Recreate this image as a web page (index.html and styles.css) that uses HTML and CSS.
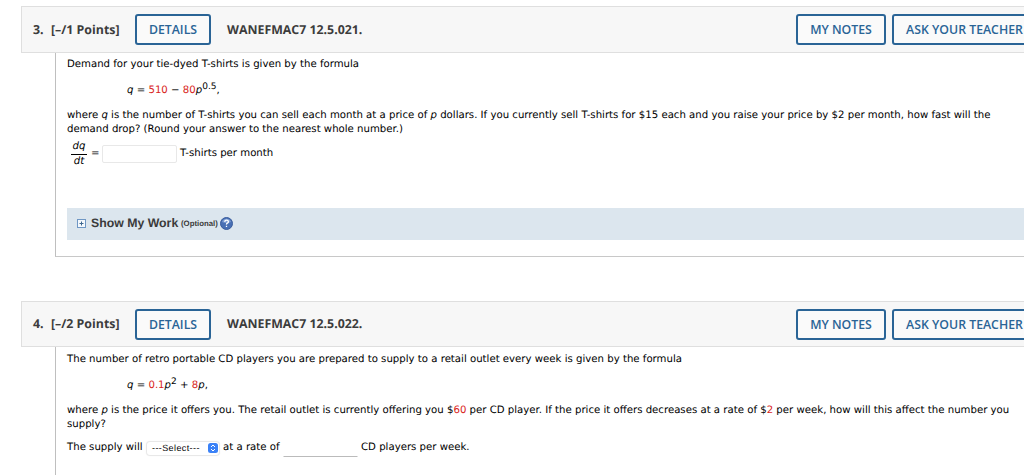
FILE: index.html
```
<!DOCTYPE html>
<html lang="en">
<head>
  <meta charset="UTF-8">
  <title>Homework</title>
  <meta name="viewport" content="width=device-width, initial-scale=1.0">
  <link rel="stylesheet" href="styles.css">
</head>
<body>
  <div class="question">
    <div class="question-header">
      <span class="number">3.</span>
      <span class="points">[–/1 Points]</span>
      <button type="button" class="btn btn-details">DETAILS</button>
      <span class="question-name">WANEFMAC7 12.5.021.</span>
      <div class="actions">
        <button type="button" class="btn btn-notes">MY NOTES</button>
        <button type="button" class="btn btn-teacher">ASK YOUR TEACHER</button>
      </div>
    </div>
    <div class="question-body">
      <p>Demand for your tie-dyed T-shirts is given by the formula</p>
      <p class="formula"><i>q</i> = <span class="red">510</span> − <span class="red">80</span><i>p</i><sup>0.5</sup>,</p>
      <p>where <i>q</i> is the number of T-shirts you can sell each month at a price of <i>p</i> dollars. If you currently sell T-shirts for $15 each and you raise your price by $2 per month, how fast will the<br>demand drop? (Round your answer to the nearest whole number.)</p>
      <div class="answer">
        <span class="fraction"><i>dq</i><i class="bottom">dt</i></span>
        <span class="equals">=</span>
        <input type="text" class="blank" aria-label="Answer">
        <span>T-shirts per month</span>
      </div>
      <div class="show-work">
        <svg class="plus" width="9" height="9" viewBox="0 0 9 9">
          <rect x=".5" y=".5" width="8" height="8" fill="#f4f8fc" stroke="#6f97c4"/>
          <path d="M2.5 4.5h4M4.5 2.5v4" stroke="#3d668f"/>
        </svg>
        <b>Show My Work</b>
        <small>(Optional)</small>
        <svg class="help" width="13" height="13" viewBox="0 0 13 13">
          <circle cx="6.5" cy="6.5" r="6" fill="#486fb4" stroke="#3a5c9c"/>
          <path d="M2 5a4.8 4.8 0 0 1 9 0q-4.500 2-9 0" fill="#7c9cd2"/>
          <path d="M4.700 4.900q.1-1.700 1.900-1.700t1.800 1.500q0 1-1 1.500t-.9 1.400M6.500 8.800v1.300" fill="none" stroke="#fff" stroke-width="1.300"/>
        </svg>
      </div>
    </div>
  </div>

  <div class="question second">
    <div class="question-header">
      <span class="number">4.</span>
      <span class="points">[–/2 Points]</span>
      <button type="button" class="btn btn-details">DETAILS</button>
      <span class="question-name">WANEFMAC7 12.5.022.</span>
      <div class="actions">
        <button type="button" class="btn btn-notes">MY NOTES</button>
        <button type="button" class="btn btn-teacher">ASK YOUR TEACHER</button>
      </div>
    </div>
    <div class="question-body">
      <p>The number of retro portable CD players you are prepared to supply to a retail outlet every week is given by the formula</p>
      <p class="formula"><i>q</i> = <span class="red">0.1</span><i>p</i><sup>2</sup> + <span class="red">8</span><i>p</i>,</p>
      <p>where <i>p</i> is the price it offers you. The retail outlet is currently offering you $<span class="red">60</span> per CD player. If the price it offers decreases at a rate of $<span class="red">2</span> per week, how will this affect the number you<br>supply?</p>
      <div class="supply">
        <span class="supply-start">The supply will</span>
        <span class="select">---Select---
          <svg width="10" height="10" viewBox="0 0 10 10">
            <rect width="10" height="10" rx="2.500" fill="#3b82f7"/>
            <path d="M3 4l2-2 2 2M3 6l2 2 2-2" fill="none" stroke="#fff"/>
          </svg>
        </span>
        <span class="supply-rate">at a rate of</span>
        <input type="text" class="blank underline" aria-label="Rate">
        <span>CD players per week.</span>
      </div>
    </div>
  </div>
</body>
</html>
```

FILE: styles.css
```
body {
  box-sizing: border-box;
  margin: 0;
  padding: 6px 0 0 21px;
  height: 475px;
  overflow: hidden;
  background: #fff;
  color: #000;
  font-family: Verdana, "DejaVu Sans", sans-serif;
  font-size: 10.16px;
  line-height: 14px;
  text-rendering: geometricPrecision;
}
.question {
  width: 1030px;
  white-space: nowrap;
}
.second {
  margin-top: 44px;
}
.question-header {
  box-sizing: border-box;
  height: 47px;
  display: flex;
  align-items: center;
  padding-left: 11px;
  background: #f7f7f7;
  border: 1px solid #dfdfdf;
  color: #3c3c3c;
  font-family: "Open Sans", sans-serif;
  font-size: 12.35px;
  font-weight: 700;
}
.second .question-header {
  height: 46px;
}
.number {
  width: 18px;
}
.points {
  width: 84px;
}
.btn {
  box-sizing: border-box;
  height: 31px;
  padding: 0;
  background: #fafafa;
  border: 2px solid #2a6496;
  border-radius: 3px;
  color: #2a6496;
  font-family: "Open Sans", sans-serif;
  font-size: 12.3px;
  font-weight: 600;
}
.btn-details {
  width: 76px;
  margin-right: 16px;
}
.actions {
  display: flex;
  gap: 6px;
  margin-left: auto;
  margin-right: 13px;
}
.btn-notes {
  width: 90px;
}
.btn-teacher {
  width: 145px;
}
.question-body {
  box-sizing: border-box;
  height: 204px;
  margin-left: 34px;
  padding: 5px 0 0 11px;
  border-left: 1px solid #bfbfbf;
  border-bottom: 1px solid #c8c8c8;
}
.second .question-body {
  height: 128px;
  padding-top: 6px;
  border-bottom: 0;
}
.question-body p {
  margin: 0;
}
.question-body .formula {
  margin: 12px 0 11px;
  padding-left: 60px;
}
.red {
  color: #d9241b;
}
sup {
  font-size: 9px;
  line-height: 0;
  vertical-align: 4px;
}
.answer {
  display: flex;
  align-items: center;
  height: 28px;
  margin-top: 3px;
}
.fraction {
  width: 16px;
  margin: 0 4px;
  text-align: center;
  line-height: 14px;
}
.fraction i {
  display: block;
}
.fraction .bottom {
  border-top: 1px solid #000;
}
.equals {
  width: 11px;
}
.blank {
  box-sizing: border-box;
  width: 75px;
  height: 18px;
  margin: 0 3px 0 0;
  padding: 0;
  border: 1px solid #e8e8e8;
  border-radius: 2px;
  background: #fff;
}
.underline {
  height: 17px;
  border-color: #fff #fff #bbb;
  border-radius: 0;
}
.show-work {
  box-sizing: border-box;
  display: flex;
  align-items: center;
  height: 32px;
  margin-top: 40px;
  padding: 0 0 2px 10px;
  background: #dce6ee;
  color: #3a3a3a;
  font-family: Arial, "Liberation Sans", sans-serif;
}
.show-work b {
  width: 90px;
  margin-left: 5px;
  font-size: 12.3px;
}
.show-work small {
  width: 39px;
  margin-top: 2px;
  font-size: 7.800px;
  font-weight: bold;
}
.supply {
  display: flex;
  align-items: center;
  height: 20px;
  margin-top: 6px;
}
.supply-start {
  width: 80px;
}
.supply-rate {
  width: 60px;
}
.select {
  box-sizing: border-box;
  display: flex;
  align-items: center;
  justify-content: space-between;
  width: 72px;
  height: 13px;
  margin-right: 4px;
  padding: 0 1px 0 5px;
  border-radius: 3px;
  box-shadow: 0 0 1px 1px #e6e6e6;
  font-family: Arial, "Liberation Sans", sans-serif;
  font-size: 9px;
  letter-spacing: 0.4px;
}
```
